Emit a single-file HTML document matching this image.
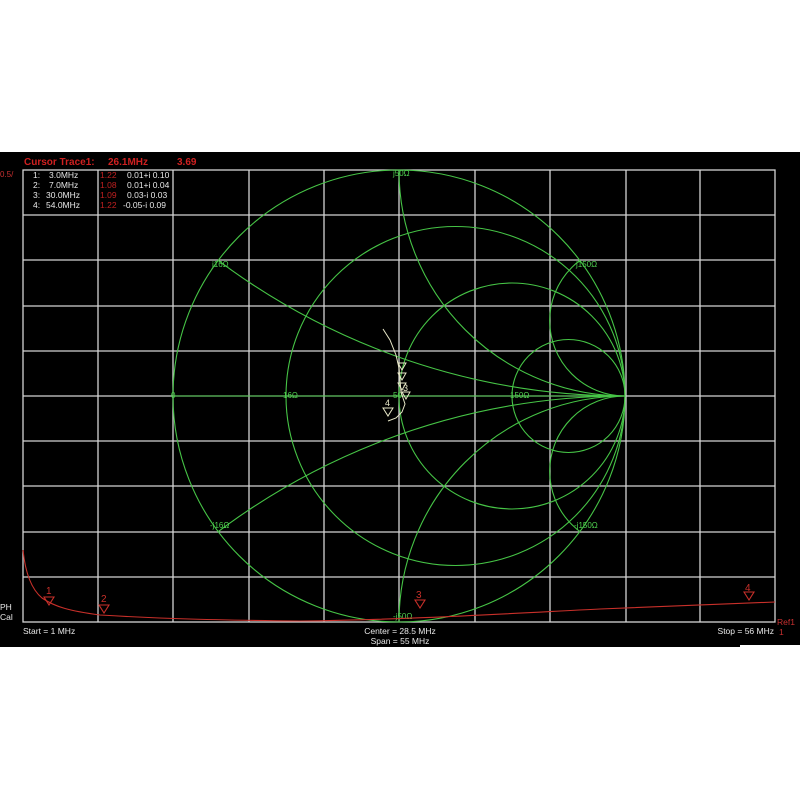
<!DOCTYPE html>
<html><head><meta charset="utf-8"><style>
html,body{margin:0;padding:0;background:#fff;width:800px;height:800px;overflow:hidden}
svg{position:absolute;left:0;top:0;display:block}
text{font-family:"Liberation Sans",Arial,sans-serif}
</style></head><body>
<svg width="800" height="800" viewBox="0 0 800 800">
<rect x="0" y="152" width="800" height="495" fill="#000"/>
<rect x="740" y="645" width="60" height="5" fill="#fff"/>
<defs><clipPath id="uc"><circle cx="399" cy="396" r="226"/></clipPath></defs>
<g stroke="#d4d4d4" stroke-width="1.3" fill="none">
<rect x="23" y="170" width="752" height="452"/>
<path d="M98 170V622M173 170V622M249 170V622M324 170V622M399 170V622M475 170V622M550 170V622M626 170V622M700 170V622
M23 215H775M23 260H775M23 306H775M23 351H775M23 396H775M23 441H775M23 486H775M23 532H775M23 577H775"/>
</g>
<g stroke="#46c446" stroke-width="1.1" fill="none">
<circle cx="399" cy="396" r="226"/>
<g clip-path="url(#uc)">
<circle cx="455.5" cy="396" r="169.5"/>
<circle cx="512" cy="396" r="113"/>
<circle cx="568.5" cy="396" r="56.5"/>
<circle cx="625" cy="-282" r="678"/>
<circle cx="625" cy="1074" r="678"/>
<circle cx="625" cy="170" r="226"/>
<circle cx="625" cy="622" r="226"/>
<circle cx="625" cy="320.7" r="75.3"/>
<circle cx="625" cy="471.3" r="75.3"/>
<path d="M173 396H625"/>
</g>
</g>
<g fill="#4fd04f" font-size="8">
<text x="393" y="176">j50Ω</text>
<text x="212" y="267">j16Ω</text>
<text x="576" y="267">j150Ω</text>
<text x="171" y="398">0</text>
<text x="283" y="398">16Ω</text>
<text x="510" y="398">150Ω</text>
<text x="393" y="398">50</text>
<text x="210" y="528">-j16Ω</text>
<text x="574" y="528">-j150Ω</text>
<text x="393" y="619">-j50Ω</text>
</g>
<g stroke="#e8e8c8" stroke-width="1" fill="none">
<path d="M383 329 L390 340 L396 355 L399 368 L400 380 L401 392 L403 398 L405 404 L402 412 L396 418 L388 421"/>
<path d="M398 363h8l-4 7zM398 373h8l-4 7zM398 383h8l-4 7zM402 392h8l-4 7zM383 408h10l-5 8z"/>
</g>
<g fill="#e8e8c8" font-size="9"><text x="385" y="406">4</text><text x="403" y="391">3</text></g>
<g stroke="#c8302a" stroke-width="1.1" fill="none">
<path d="M23 550 C25 570 30 588 42 598 C55 607 70 611 100 615 C150 618 200 620 300 621 C400 620 500 614 600 609 C680 606 740 603 775 602"/>
<path d="M44 597h10l-5 8zM99 605h10l-5 8zM415 600h10l-5 8zM744 592h10l-5 8z"/>
</g>
<g fill="#c8302a" font-size="10">
<text x="46" y="594">1</text><text x="101" y="602">2</text><text x="416" y="598">3</text><text x="745" y="591">4</text>
</g>
<g font-size="10" font-weight="bold" fill="#d02020">
<text x="24" y="165">Cursor Trace1:</text>
<text x="108" y="165">26.1MHz</text>
<text x="177" y="165">3.69</text>
</g>
<text x="0" y="177" font-size="8" fill="#c83030">0.5/</text>
<g font-size="8.5" fill="#e8e8e8">
<text x="33" y="178">1:</text><text x="49" y="178">3.0MHz</text>
<text x="33" y="188">2:</text><text x="49" y="188">7.0MHz</text>
<text x="33" y="198">3:</text><text x="46" y="198">30.0MHz</text>
<text x="33" y="208">4:</text><text x="46" y="208">54.0MHz</text>
<text x="127" y="178">0.01+i 0.10</text>
<text x="127" y="188">0.01+i 0.04</text>
<text x="127" y="198">0.03-i 0.03</text>
<text x="123" y="208">-0.05-i 0.09</text>
</g>
<g font-size="8.5" fill="#c02020">
<text x="100" y="178">1.22</text><text x="100" y="188">1.08</text><text x="100" y="198">1.09</text><text x="100" y="208">1.22</text>
</g>
<g font-size="8.5" fill="#e8e8e8">
<text x="0" y="610">PH</text><text x="0" y="620">Cal</text>
<text x="23" y="634">Start = 1 MHz</text>
<text x="400" y="634" text-anchor="middle">Center = 28.5 MHz</text>
<text x="400" y="644" text-anchor="middle">Span = 55 MHz</text>
<text x="774" y="634" text-anchor="end">Stop = 56 MHz</text>
</g>
<g font-size="8.5" fill="#c83030"><text x="777" y="625">Ref1</text><text x="779" y="635">1</text></g>
</svg>
</body></html>
